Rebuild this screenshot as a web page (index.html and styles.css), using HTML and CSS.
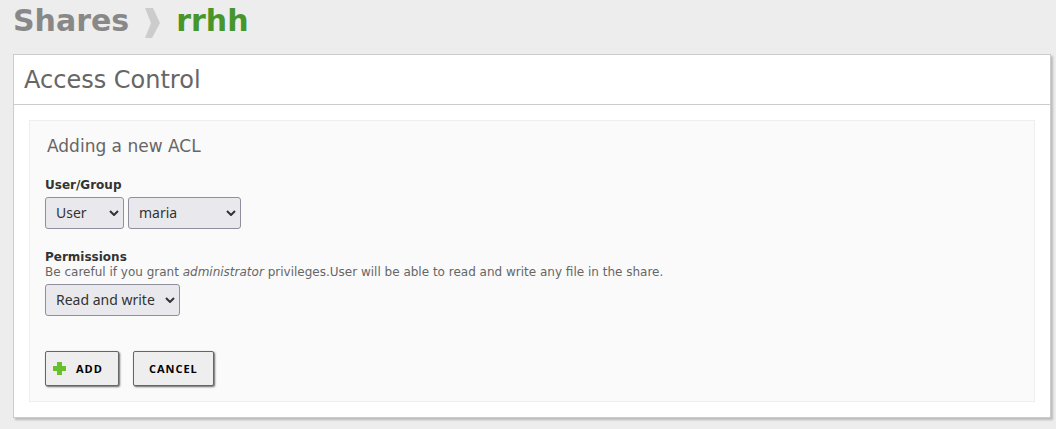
FILE: index.html
```html
<!DOCTYPE html>
<html lang="en">
<head>
<meta charset="utf-8">
<title>Shares - rrhh</title>
<link rel="stylesheet" href="styles.css">
</head>
<body>
<h1 class="breadcrumb">
  <a class="crumb" href="#">Shares</a>
  <svg class="crumb-arrow" viewBox="0 0 15 30" aria-hidden="true"><path d="M0 0h8l7 15-8 15H0l6-15z"/></svg>
  <span class="current">rrhh</span>
</h1>
<main class="card">
  <h2 class="card-title">Access Control</h2>
  <form class="panel">
    <h3 class="panel-title">Adding a new ACL</h3>
    <div class="field">
      <label class="label" for="kind">User/Group</label>
      <div class="controls">
        <span class="select-wrap kind">
          <select id="kind"><option>User</option><option>Group</option></select>
          <svg class="caret" viewBox="0 0 10 6" aria-hidden="true"><path d="M1 1l4 4 4-4"/></svg>
        </span>
        <span class="select-wrap name">
          <select aria-label="User name"><option>maria</option></select>
          <svg class="caret" viewBox="0 0 10 6" aria-hidden="true"><path d="M1 1l4 4 4-4"/></svg>
        </span>
      </div>
    </div>
    <div class="field">
      <label class="label" for="perm">Permissions</label>
      <p class="help">Be careful if you grant <em>administrator</em> privileges.User will be able to read and write any file in the share.</p>
      <div class="controls">
        <span class="select-wrap perm">
          <select id="perm"><option>Read and write</option></select>
          <svg class="caret" viewBox="0 0 10 6" aria-hidden="true"><path d="M1 1l4 4 4-4"/></svg>
        </span>
      </div>
    </div>
    <div class="actions">
      <button class="btn btn-add" type="button"><svg class="plus" viewBox="0 0 13 13" aria-hidden="true"><path d="M4 0h5v4h4v5H9v4H4V9H0V4h4z"/></svg>ADD</button>
      <button class="btn" type="button">CANCEL</button>
    </div>
  </form>
</main>
</body>
</html>
```

FILE: styles.css
```css
* { box-sizing: border-box; }

body {
  margin: 0;
  padding: 0 5px 11px 13px;
  background: #ededed;
  color: #666;
  font: 12px/15px "DejaVu Sans", sans-serif;
}

h1, h2, h3, p { margin: 0; }

.breadcrumb {
  display: flex;
  align-items: center;
  gap: 16px;
  padding: 3px 0 15px;
  font-size: 30px;
  line-height: 36px;
  font-weight: bold;
}

.crumb { color: #888; text-decoration: none; }
.current { color: #46962b; }

.crumb-arrow {
  width: 15px;
  height: 30px;
  margin-top: 4px;
  fill: #ccc;
}

.card {
  background: #fff;
  border: 1px solid #ccc;
  box-shadow: 2px 2px 2px #bbb;
}

.card-title {
  padding: 11px 10px 9px;
  border-bottom: 1px solid #ccc;
  font-size: 24px;
  line-height: 29px;
  font-weight: normal;
}

.panel {
  margin: 15px;
  padding: 15px;
  background: #fafafa;
  border: 1px solid #eee;
}

.panel-title {
  padding: 0 2px;
  margin-bottom: 22px;
  font-size: 17px;
  line-height: 20px;
  font-weight: normal;
}

.field { margin-bottom: 20px; }

.label {
  display: block;
  color: #333;
  font-weight: bold;
}

.controls {
  display: flex;
  gap: 4px;
  margin-top: 5px;
}

.help + .controls,
.label + .controls { margin-top: 4px; }

.field + .field { margin-top: 21px; }

.select-wrap {
  display: grid;
  align-items: center;
}

.select-wrap > * { grid-area: 1 / 1; }

.kind { width: 79px; }
.name { width: 113px; }
.perm { width: 135px; }

select {
  appearance: none;
  width: 100%;
  height: 32px;
  padding: 0 10px 2px;
  background: #e9e9ed;
  border: 1px solid #8f8f9d;
  border-radius: 3px;
  color: #333;
  font: 14px "Noto Sans", sans-serif;
}

.caret {
  justify-self: end;
  width: 10px;
  height: 6px;
  margin-right: 5px;
  fill: none;
  stroke: #333;
  stroke-width: 2;
  pointer-events: none;
}

.actions {
  display: flex;
  gap: 14px;
  padding-top: 15px;
}

.btn {
  display: flex;
  align-items: center;
  height: 35px;
  padding: 0 15px;
  background: #eee;
  border: 1px solid #666;
  border-radius: 2px;
  box-shadow: 1px 1px 2px #666;
  color: #000;
  font: bold 11px "Open Sans", sans-serif;
  letter-spacing: 1px;
}

.btn-add {
  gap: 10px;
  padding-left: 7px;
}

.plus {
  width: 13px;
  height: 13px;
  fill: #67bf2b;
}
```
